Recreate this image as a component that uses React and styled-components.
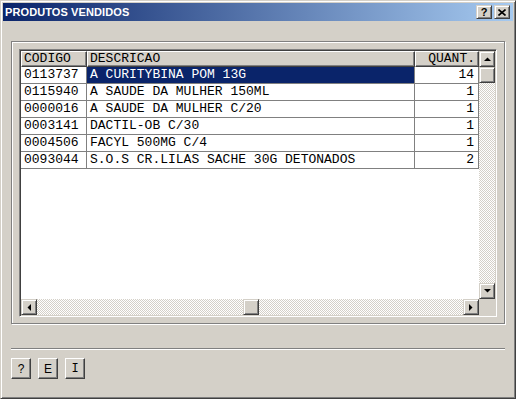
import React from 'react'
import styled, { createGlobalStyle } from 'styled-components'

const face = '#d4d0c8'
const shade = '#808080'
const dark = '#404040'

const GlobalStyle = createGlobalStyle`
  html, body {
    margin: 0;
    padding: 0;
    background: ${face};
  }
  * {
    box-sizing: border-box;
  }
`

const Window = styled.div`
  width: 516px;
  height: 399px;
  background: ${face};
  border: 1px solid;
  border-color: ${face} ${dark} ${dark} ${face};
  box-shadow: inset 1px 1px #fff, inset -1px -1px ${shade};
  padding: 2px;
  display: flex;
  flex-direction: column;
  font-family: "Liberation Sans", Arial, sans-serif;
`

const TitleBar = styled.div`
  height: 18px;
  display: flex;
  align-items: center;
  gap: 2px;
  padding: 0 3px 0 2px;
  background: linear-gradient(to right, #0a246a, #a6caf0);
`

const Title = styled.span`
  flex: 1;
  color: #fff;
  font-weight: bold;
  font-size: 11px;
  line-height: 18px;
  letter-spacing: 0.1px;
`

const Raised = styled.div`
  display: flex;
  align-items: center;
  justify-content: center;
  background: ${face};
  border: 1px solid;
  border-color: ${face} ${dark} ${dark} ${face};
  box-shadow: inset 1px 1px #fff, inset -1px -1px ${shade};
`

const CaptionButton = styled(Raised)`
  width: 16px;
  height: 14px;
  font-size: 11px;
  font-weight: bold;
  color: #000;
`

const Body = styled.div`
  display: flex;
  flex-direction: column;
  padding: 20px 8px 0;
`

const Frame = styled.div`
  width: 494px;
  height: 283px;
  border: 1px solid ${shade};
  box-shadow: inset 1px 1px #fff, 1px 1px #fff;
  padding: 7px;
`

const GridBox = styled.div`
  width: 478px;
  height: 268px;
  border: 1px solid;
  border-color: ${shade} #fff #fff ${shade};
  box-shadow: inset 1px 1px ${dark}, inset -1px -1px ${face};
  padding: 1px;
  display: grid;
  grid-template-columns: 458px 16px;
  grid-template-rows: 248px 16px;
`

const DataArea = styled.div`
  background: #fff;
  overflow: hidden;
  font-family: "Liberation Mono", "Courier New", monospace;
  font-size: 13px;
  color: #000;
`

const Row = styled.div`
  display: grid;
  grid-template-columns: 66px 328px 64px;
`

const HeaderCell = styled.div`
  height: 16px;
  line-height: 14px;
  background: ${face};
  border: 1px solid;
  border-color: #fff ${dark} ${dark} #fff;
  box-shadow: inset -1px -1px ${shade};
  padding: 0 ${p => (p.$right ? '3px' : '0')} 0 ${p => (p.$right ? '0' : '2px')};
  text-align: ${p => (p.$right ? 'right' : 'left')};
  white-space: nowrap;
  overflow: hidden;
`

const Cell = styled.div`
  height: 17px;
  line-height: 16px;
  border-right: 1px solid ${shade};
  border-bottom: 1px solid ${shade};
  padding: 0 ${p => (p.$right ? '4px' : '3px')};
  text-align: ${p => (p.$right ? 'right' : 'left')};
  background: ${p => (p.$selected ? '#0a246a' : '#fff')};
  color: ${p => (p.$selected ? '#fff' : '#000')};
  white-space: nowrap;
  overflow: hidden;
`

const VScroll = styled.div`
  display: flex;
  flex-direction: column;
`

const HScroll = styled.div`
  display: flex;
`

const Track = styled.div`
  flex: 1;
  display: flex;
  flex-direction: ${p => (p.$vertical ? 'column' : 'row')};
  background: repeating-conic-gradient(#fff 0 25%, ${face} 0 50%) 0 0 / 2px 2px;
`

const ScrollButton = styled(Raised)`
  width: 16px;
  height: 16px;
  flex: none;
`

const Thumb = styled(ScrollButton)`
  margin-left: ${p => p.$offset || 0}px;
`

const Corner = styled.div`
  background: ${face};
`

const Separator = styled.div`
  width: 494px;
  height: 2px;
  margin-top: 24px;
  border-top: 1px solid ${shade};
  border-bottom: 1px solid #fff;
`

const Toolbar = styled.div`
  display: flex;
  gap: 7px;
  margin-top: 8px;
`

const ToolButton = styled.button`
  width: 20px;
  height: 21px;
  padding: 0;
  background: ${face};
  border: 1px solid;
  border-color: #fff ${dark} ${dark} #fff;
  box-shadow: inset -1px -1px ${shade};
  font-family: ${p => (p.$serif ? '"Liberation Mono", monospace' : '"Liberation Sans", Arial, sans-serif')};
  font-size: 12px;
  color: #000;
`

const arrows = {
  up: 'M0 4h7L3.5 0.5z',
  down: 'M0 0h7L3.5 3.5z',
  left: 'M4 0v7L0.5 3.5z',
  right: 'M0 0v7L3.5 3.5z',
}

function Arrow({ dir }) {
  const vertical = dir === 'up' || dir === 'down'
  return (
    <svg width={vertical ? 7 : 4} height={vertical ? 4 : 7} viewBox={vertical ? '0 0 7 4' : '0 0 4 7'}>
      <path d={arrows[dir]} fill="#000" />
    </svg>
  )
}

const rows = [
  ['0113737', 'A CURITYBINA POM 13G', '14'],
  ['0115940', 'A SAUDE DA MULHER 150ML', '1'],
  ['0000016', 'A SAUDE DA MULHER C/20', '1'],
  ['0003141', 'DACTIL-OB C/30', '1'],
  ['0004506', 'FACYL 500MG C/4', '1'],
  ['0093044', 'S.O.S CR.LILAS SACHE 30G DETONADOS', '2'],
]

export default function App() {
  return (
    <>
      <GlobalStyle />
      <Window>
        <TitleBar>
          <Title>PRODUTOS VENDIDOS</Title>
          <CaptionButton>?</CaptionButton>
          <CaptionButton>
            <svg width="8" height="7" viewBox="0 0 8 7">
              <path d="M0.5 0.5L7.5 6.5M7.5 0.5L0.5 6.5" stroke="#000" strokeWidth="1.6" />
            </svg>
          </CaptionButton>
        </TitleBar>
        <Body>
          <Frame>
            <GridBox>
              <DataArea>
                <Row>
                  <HeaderCell>CODIGO</HeaderCell>
                  <HeaderCell>DESCRICAO</HeaderCell>
                  <HeaderCell $right>QUANT.</HeaderCell>
                </Row>
                {rows.map(([code, desc, qty], i) => (
                  <Row key={code}>
                    <Cell>{code}</Cell>
                    <Cell $selected={i === 0}>{desc}</Cell>
                    <Cell $right>{qty}</Cell>
                  </Row>
                ))}
              </DataArea>
              <VScroll>
                <ScrollButton><Arrow dir="up" /></ScrollButton>
                <Track $vertical>
                  <ScrollButton />
                </Track>
                <ScrollButton><Arrow dir="down" /></ScrollButton>
              </VScroll>
              <HScroll>
                <ScrollButton><Arrow dir="left" /></ScrollButton>
                <Track>
                  <Thumb $offset={206} />
                </Track>
                <ScrollButton><Arrow dir="right" /></ScrollButton>
              </HScroll>
              <Corner />
            </GridBox>
          </Frame>
          <Separator />
          <Toolbar>
            <ToolButton>?</ToolButton>
            <ToolButton>E</ToolButton>
            <ToolButton $serif>I</ToolButton>
          </Toolbar>
        </Body>
      </Window>
    </>
  )
}
